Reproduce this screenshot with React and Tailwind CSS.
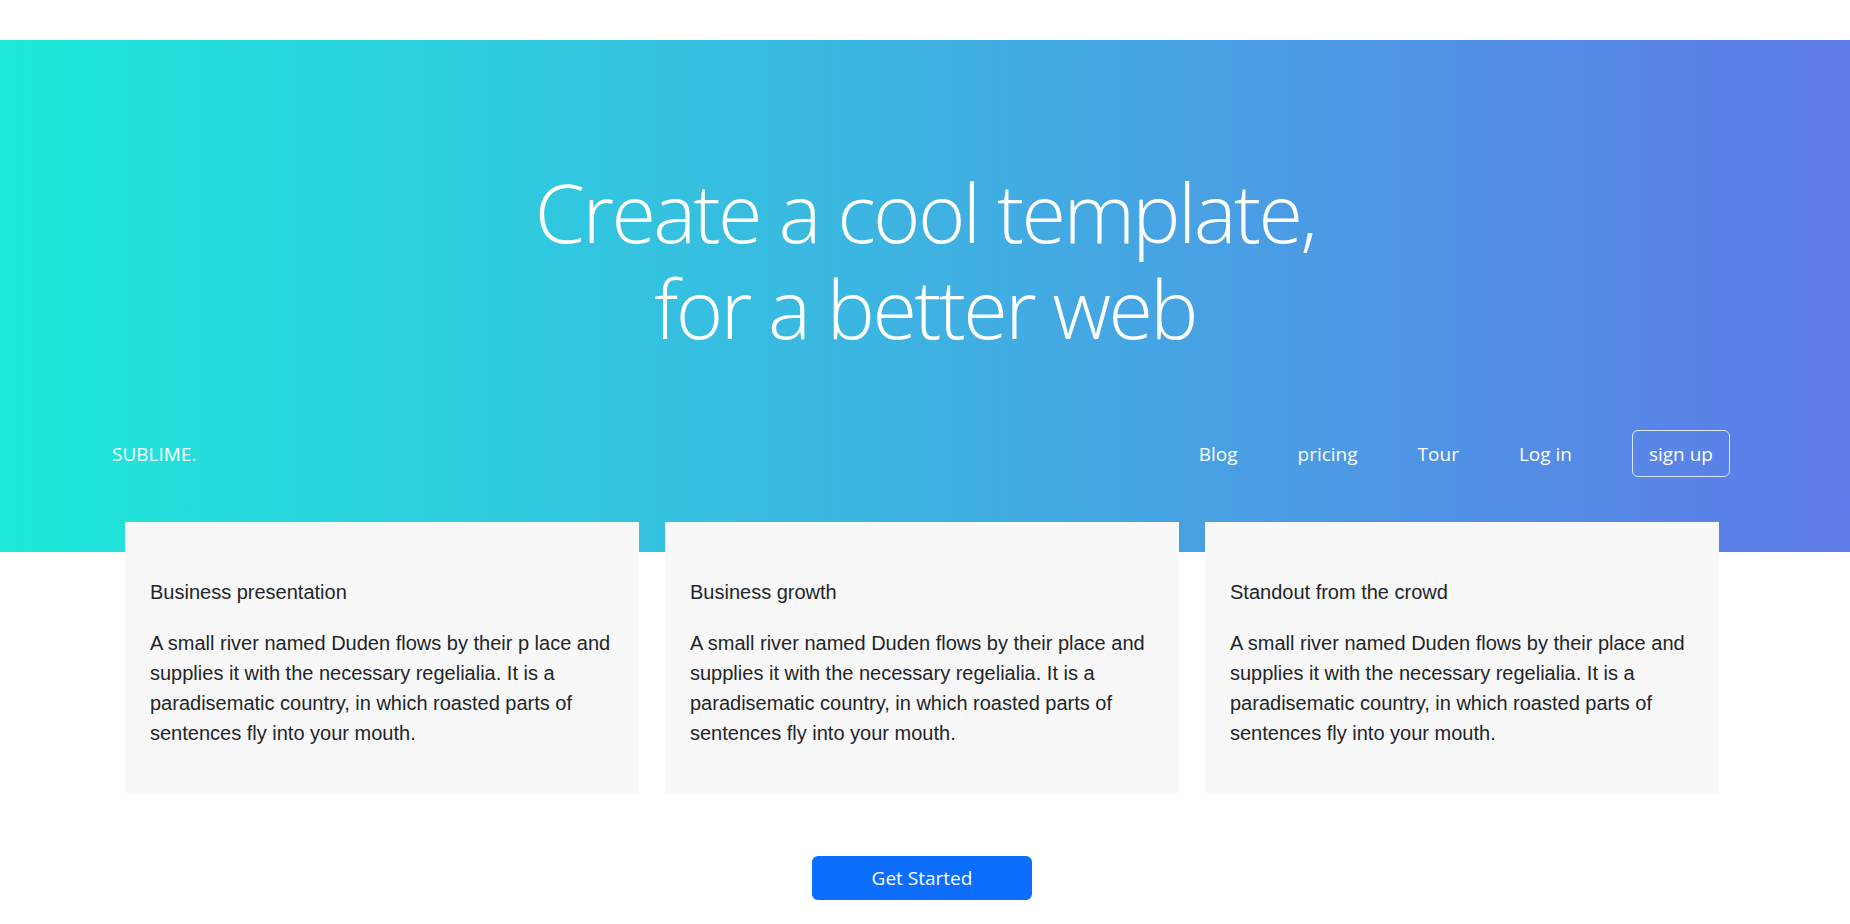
import React from 'react'

const navLinks = ['Blog', 'pricing', 'Tour', 'Log in']

const cards = [
  {
    title: 'Business presentation',
    text: 'A small river named Duden flows by their p lace and supplies it with the necessary regelialia. It is a paradisematic country, in which roasted parts of sentences fly into your mouth.',
  },
  {
    title: 'Business growth',
    text: 'A small river named Duden flows by their place and supplies it with the necessary regelialia. It is a paradisematic country, in which roasted parts of sentences fly into your mouth.',
  },
  {
    title: 'Standout from the crowd',
    text: 'A small river named Duden flows by their place and supplies it with the necessary regelialia. It is a paradisematic country, in which roasted parts of sentences fly into your mouth.',
  },
]

const uiFont = { fontFamily: '"Open Sans", "Noto Sans", sans-serif' }

export default function App() {
  return (
    <div className="min-h-screen bg-white pt-10" style={uiFont}>
      {/* Hero */}
      <section className="h-[512px] bg-[linear-gradient(to_right,#1de9db,#5f7ae8)] text-white flex flex-col">
        <h1 className="pt-[124px] text-center text-[81px] leading-[96px] font-light tracking-[-2.6px]">
          <span className="block">Create a cool template,</span>
          <span className="block">for a better web</span>
        </h1>

        <nav className="mt-[74px] flex items-center justify-between pl-[112px] pr-[120px]">
          <a className="text-[19px] leading-none pt-[2px]">SUBLIME.</a>
          <div className="flex items-center gap-[60px] text-[19px]">
            {navLinks.map((l) => (
              <a key={l} className="leading-none pt-[2px]">{l}</a>
            ))}
            <a className="h-[47px] px-4 pt-[2px] flex items-center rounded-md border border-white/80">
              sign up
            </a>
          </div>
        </nav>
      </section>

      {/* Cards */}
      <div
        className="-mt-[30px] pl-[125px] pr-[131px]"
        style={{ fontFamily: '"Liberation Sans", Arial, sans-serif' }}
      >
        <div className="grid grid-cols-3 gap-[26px]">
          {cards.map((c) => (
            <div key={c.title} className="bg-[#f8f8f8] px-[25px] pt-[55px] pb-[45px] text-[#212529] text-[20px] leading-[30px]">
              <h5 className="mb-[21px]">{c.title}</h5>
              <p>{c.text}</p>
            </div>
          ))}
        </div>

        <div className="flex justify-center pt-[63px]">
          <button className="w-[220px] h-[44px] rounded-md bg-[#0d6efd] text-white text-[19px]" style={uiFont}>
            Get Started
          </button>
        </div>
      </div>
    </div>
  )
}
